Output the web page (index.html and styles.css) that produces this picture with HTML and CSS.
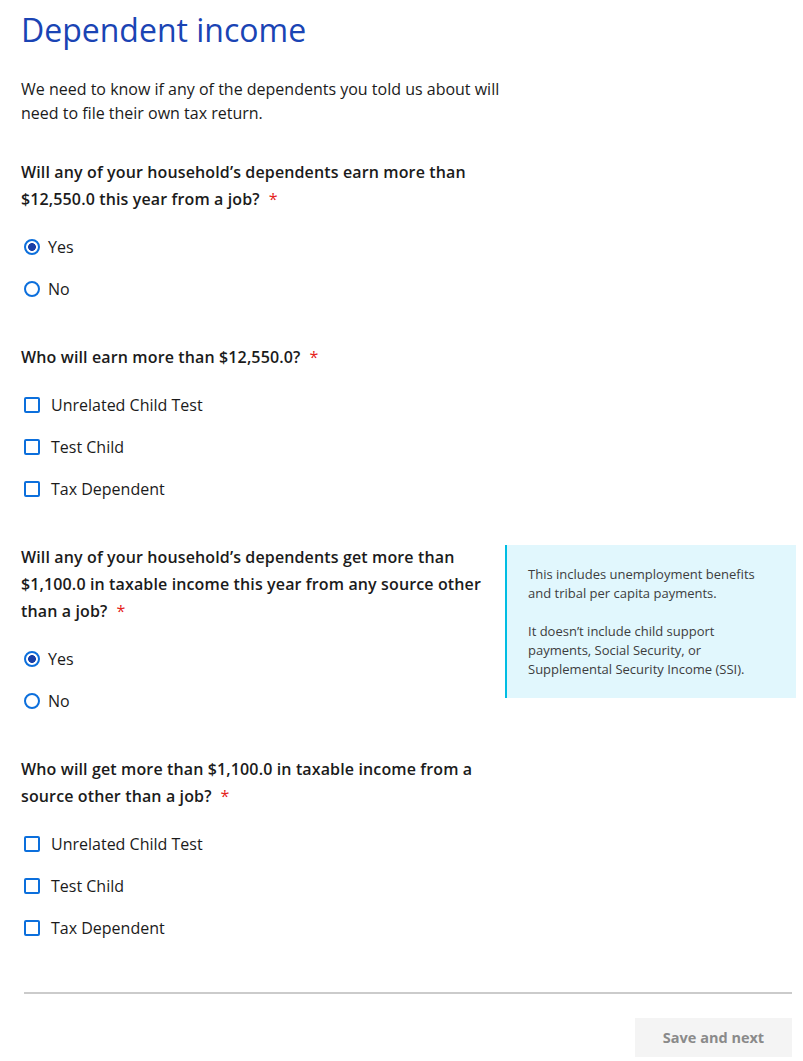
FILE: index.html
```html
<!DOCTYPE html>
<html lang="en">
<head>
  <meta charset="UTF-8">
  <meta name="viewport" content="width=device-width, initial-scale=1.0">
  <title>Dependent income</title>
  <link rel="stylesheet" href="styles.css">
</head>
<body>

  <main class="page">
    <h1 class="page-title">Dependent income</h1>

    <p class="intro">We need to know if any of the dependents you told us about will need to file their own tax return.</p>

    <form id="dependent-income" class="form">

      <section class="question">
        <fieldset class="field">
          <legend class="field-label">Will any of your household’s dependents earn more than $12,550.0 this year from a job?<span class="required">*</span></legend>
          <label class="option"><input type="radio" name="earn-job" value="yes" checked> Yes</label>
          <label class="option"><input type="radio" name="earn-job" value="no"> No</label>
        </fieldset>
      </section>

      <section class="question">
        <fieldset class="field">
          <legend class="field-label">Who will earn more than $12,550.0?<span class="required">*</span></legend>
          <label class="option option-check"><input type="checkbox" name="earn-who"> Unrelated Child Test</label>
          <label class="option option-check"><input type="checkbox" name="earn-who"> Test Child</label>
          <label class="option option-check"><input type="checkbox" name="earn-who"> Tax Dependent</label>
        </fieldset>
      </section>

      <section class="question">
        <fieldset class="field">
          <legend class="field-label">Will any of your household’s dependents get more than $1,100.0 in taxable income this year from any source other than a job?<span class="required">*</span></legend>
          <label class="option"><input type="radio" name="other-income" value="yes" checked> Yes</label>
          <label class="option"><input type="radio" name="other-income" value="no"> No</label>
        </fieldset>
        <aside class="hint">
          <p>This includes unemployment benefits and tribal per capita payments.</p>
          <p>It doesn’t include child support payments, Social Security, or Supplemental Security Income (SSI).</p>
        </aside>
      </section>

      <section class="question">
        <fieldset class="field">
          <legend class="field-label">Who will get more than $1,100.0 in taxable income from a source other than a job?<span class="required">*</span></legend>
          <label class="option option-check"><input type="checkbox" name="other-who"> Unrelated Child Test</label>
          <label class="option option-check"><input type="checkbox" name="other-who"> Test Child</label>
          <label class="option option-check"><input type="checkbox" name="other-who"> Tax Dependent</label>
        </fieldset>
      </section>

      <div class="form-footer">
        <button type="button" class="btn-next" disabled>Save and next</button>
      </div>
    </form>
  </main>

</body>
</html>
```

FILE: styles.css
```css
body {
  margin: 0;
  font-family: "Open Sans", "Noto Sans", Arial, sans-serif;
  color: #1b1b1b;
  background: #fff;
}

.page {
  padding: 10px 7px 0 21px;
}

.page-title {
  margin: 0;
  font-size: 32px;
  line-height: 40px;
  font-weight: 400;
  color: #1a44b4;
}

.intro {
  width: 484px;
  margin: 27px 0 0;
  font-size: 16px;
  line-height: 24px;
}

.form {
  margin-top: 34px;
}

.question {
  display: grid;
  grid-template-columns: 484px 1fr;
  align-items: start;
  margin-bottom: 43px;
}

.field {
  margin: 0;
  padding: 0;
  border: none;
  min-width: 0;
}

.field-label {
  padding: 0;
  margin-bottom: 22px;
  font-size: 16px;
  line-height: 27px;
  font-weight: 600;
  letter-spacing: 0.13px;
}

.required {
  display: inline-block;
  margin-left: 9px;
  color: #e5221b;
  font-weight: 400;
}

.option {
  display: flex;
  align-items: center;
  gap: 8px;
  height: 24px;
  margin-bottom: 18px;
  font-size: 16px;
  line-height: 24px;
}

.option:last-of-type {
  margin-bottom: 0;
}

.option-check {
  gap: 11px;
}

.option input {
  appearance: none;
  -webkit-appearance: none;
  margin: 0 0 0 3px;
  width: 16px;
  height: 16px;
  border: 2px solid #0c6fdc;
  background: #fff;
  flex-shrink: 0;
}

.option input[type="radio"] {
  border-radius: 50%;
}

.option input[type="radio"]:checked {
  background: radial-gradient(circle, #1a3fa6 0 3.6px, #fff 4.2px);
}

.option input[type="checkbox"] {
  border-radius: 2px;
}

.hint {
  margin-top: 1px;
  padding: 20px 16px 19px 21px;
  border-left: 2px solid #00bde3;
  background-color: #e1f7fd;
  font-size: 13px;
  line-height: 19px;
  color: #3d3d3d;
}

.hint p {
  margin: 0 0 19px;
}

.hint p:last-child {
  margin-bottom: 0;
}

.form-footer {
  display: flex;
  justify-content: flex-end;
  margin: 52px 4px 0 3px;
  padding-top: 24px;
  border-top: 2px solid #cbcbcb;
}

.btn-next {
  width: 157px;
  height: 39px;
  border: none;
  background-color: #f4f4f4;
  color: #8a8a8a;
  font-family: inherit;
  font-size: 14.5px;
  font-weight: 700;
}
```
